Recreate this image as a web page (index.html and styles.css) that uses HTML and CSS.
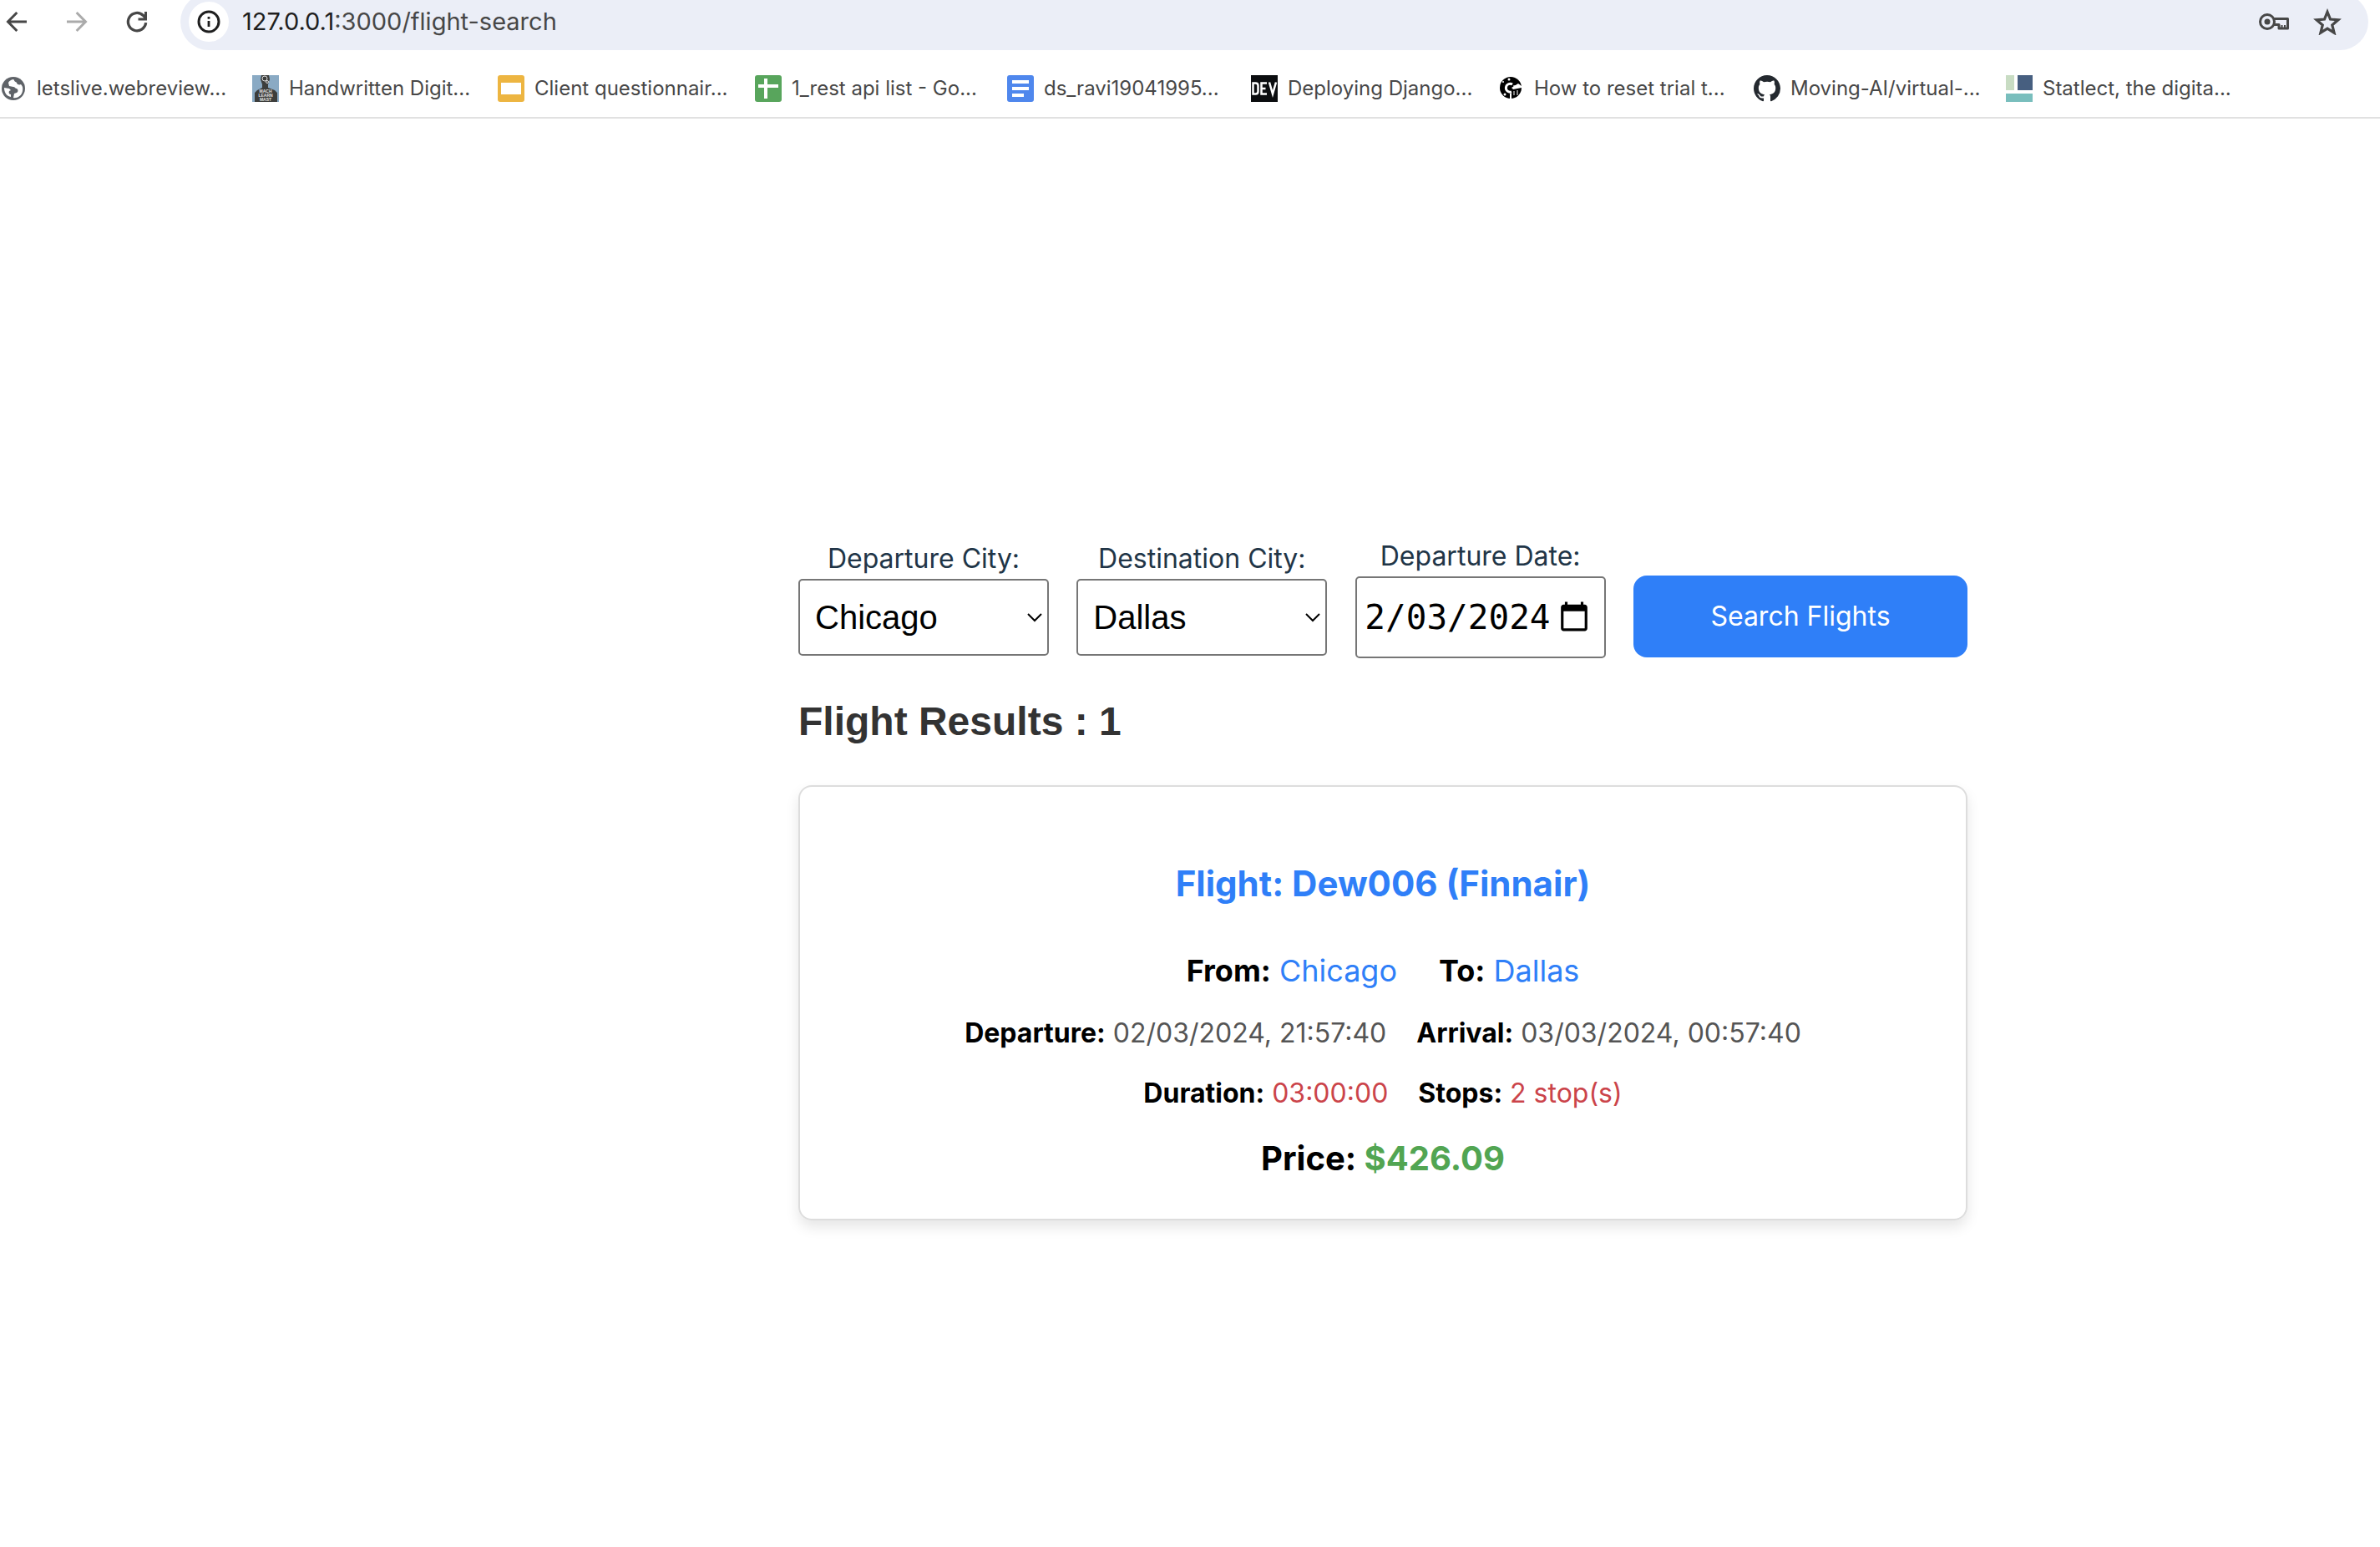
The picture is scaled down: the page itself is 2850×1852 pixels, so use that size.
FILE: index.html
```html
<!DOCTYPE html>
<html lang="en">
<head>
<meta charset="utf-8">
<title>Flight Search</title>
<link rel="stylesheet" href="styles.css">
</head>
<body>
<header class="browser">
  <div class="toolbar">
    <button class="nav-button" type="button" aria-label="Back"><svg viewBox="0 0 24 24"><path fill="none" stroke="currentColor" stroke-width="2" d="M20 12H5.500M12.200 4.700 5 12l7.200 7.300"/></svg></button>
    <button class="nav-button nav-button-off" type="button" aria-label="Forward"><svg viewBox="0 0 24 24"><path fill="none" stroke="currentColor" stroke-width="2" d="M4 12h14.500M11.800 4.700 19 12l-7.200 7.300"/></svg></button>
    <button class="nav-button" type="button" aria-label="Reload"><svg viewBox="0 0 24 24"><path fill="none" stroke="currentColor" stroke-width="2.200" d="M19.100 12.800a7.100 7.100 0 1 1-2.100-5.800l2 2.200"/><path fill="currentColor" d="M20 4v7h-7V9h5V4z"/></svg></button>
    <div class="address">
      <button class="site-info" type="button" aria-label="Site information"><svg viewBox="0 0 28 28"><circle cx="14" cy="14" r="12" fill="none" stroke="currentColor" stroke-width="3"/><path fill="currentColor" d="M12.600 13h2.800v7h-2.800zM12.600 8h2.800v2.800h-2.800z"/></svg></button>
      <span class="url"><span class="url-host">127.0.0.1</span>:3000/flight-search</span>
      <button class="address-action" type="button" aria-label="Passwords"><svg class="key" viewBox="0 0 38 22"><circle cx="11" cy="11" r="8.500" fill="none" stroke="currentColor" stroke-width="3"/><circle cx="11" cy="11" r="3.500" fill="currentColor"/><path fill="none" stroke="currentColor" stroke-width="3" stroke-linejoin="round" d="M19 7.500h16.500v11.500H25v-4.500h-6"/><path stroke="currentColor" stroke-width="2" d="M28.500 19v-4M32 19v-4"/></svg></button>
      <button class="address-action" type="button" aria-label="Bookmark this tab"><svg class="star" viewBox="0 0 32 31"><path fill="none" stroke="currentColor" stroke-width="3" d="m16 4 3.300 8.300 8.900.7-6.800 5.800 2.200 8.700L16 22.800l-7.600 4.700 2.200-8.700L3.800 13l8.900-.7z"/></svg></button>
    </div>
  </div>
  <nav class="bookmarks">
    <a class="bookmark" href="#"><svg viewBox="0 0 32 32"><circle cx="16" cy="16" r="14" fill="#5f6368"/><path fill="#fff" d="M16 5c-3 .5-5 2-6 4l1 4 5 1c2 0 2 2 4 2 2 1 2 4 0 5l-3 1-1 5c4 1 10-2 11-8 1-5-1-7-2-8-2 1-5 0-5-2 0-1-3-1-3-3zM5 15c0 6 3 10 8 11v-3c-2 0-3-2-2-4l2-1-2-2z"/></svg><span>letslive.webreview...</span></a>
    <a class="bookmark" href="#"><svg viewBox="0 0 32 32"><path fill="#8aaac4" d="M0 0h32v32H0z"/><path fill="#3d3e3c" d="M11 0h9l1 5-2 6v4l8 3 3 3v11H3V21l3-3 6-3v-4l-2-6z"/><circle cx="15" cy="4" r="3" fill="none" stroke="#ddd"/><circle cx="18" cy="8" r="1.500" fill="none" stroke="#ddd"/><g fill="#e4e4e4" font-family="Liberation Sans" font-weight="700" font-size="5" text-anchor="middle"><text x="16" y="21">MACH</text><text x="16" y="26">LEARN</text><text x="16" y="31">MAST</text></g></svg><span>Handwritten Digit...</span></a>
    <a class="bookmark" href="#"><svg viewBox="0 0 32 32"><rect width="32" height="32" rx="3" fill="#edb541"/><path fill="#fff" d="M4 9h24v14H4z"/></svg><span>Client questionnair...</span></a>
    <a class="bookmark" href="#"><svg viewBox="0 0 32 32"><rect width="32" height="32" rx="3" fill="#58a55c"/><path fill="#fff" d="M11 4h4v7h13v4H15v13h-4V15H4v-4h7z"/></svg><span>1_rest api list - Go...</span></a>
    <a class="bookmark" href="#"><svg viewBox="0 0 32 32"><rect width="32" height="32" rx="3" fill="#4f87ed"/><path fill="#fff" d="M6 6h20v4H6zM6 14h20v4H6zM6 22h14v4H6z"/></svg><span>ds_ravi19041995...</span></a>
    <a class="bookmark" href="#"><svg viewBox="0 0 32 32"><path fill="#0b0d0f" d="M0 0h32v32H0z"/><path fill="none" stroke="#fff" stroke-width="2.500" d="M2.500 9.500v13h3q3 0 3-3v-7q0-3-3-3zM19 9.500h-6.500v13H19M12.500 16h5M22 8.500l4 14 4-14"/></svg><span>Deploying Django...</span></a>
    <a class="bookmark" href="#"><svg viewBox="0 0 32 32"><circle cx="16" cy="15" r="13" fill="#000"/><path fill="none" stroke="#fff" stroke-width="3" d="M17 20a5 5 0 1 1 1-9"/><path fill="#fff" d="m17 15 8-5 4 3v2l-10 2zM15 22h2v7h-2z"/><circle cx="14" cy="5" r="1.500" fill="#fff"/><circle cx="7" cy="8" r="1" fill="#fff"/><circle cx="9" cy="23" r="1.500" fill="#fff"/><path stroke="#fff" d="M20 19v5M24 18v6M19 13l8-1"/></svg><span>How to reset trial t...</span></a>
    <a class="bookmark" href="#"><svg viewBox="0 0 16 16"><path fill="#24292f" d="M8 0C3.580 0 0 3.580 0 8c0 3.540 2.290 6.530 5.470 7.590.4.070.55-.17.55-.38 0-.19-.01-.82-.01-1.490-2.010.37-2.530-.49-2.690-.94-.09-.23-.48-.94-.82-1.130-.28-.15-.68-.52-.01-.53.63-.01 1.080.58 1.230.82.72 1.210 1.870.87 2.330.66.07-.52.28-.87.51-1.070-1.780-.2-3.640-.89-3.640-3.950 0-.87.31-1.590.82-2.150-.08-.2-.36-1.020.08-2.120 0 0 .67-.21 2.200.82.64-.18 1.320-.27 2-.27s1.360.09 2 .27c1.530-1.040 2.200-.82 2.200-.82.44 1.100.16 1.920.08 2.120.51.56.82 1.270.82 2.150 0 3.070-1.870 3.750-3.650 3.950.29.25.54.73.54 1.480 0 1.070-.01 1.930-.01 2.200 0 .21.15.46.55.38A8.010 8.010 0 0 0 16 8c0-4.420-3.580-8-8-8z"/></svg><span>Moving-AI/virtual-...</span></a>
    <a class="bookmark" href="#"><svg viewBox="0 0 32 32"><path fill="#c8dcc3" d="M0 0h10v18H0z"/><path fill="#475f80" d="M14 0h18v18H14z"/><path fill="#79bebd" d="M0 22h32v10H0z"/></svg><span>Statlect, the digita...</span></a>
  </nav>
</header>
<main class="page">
  <div class="content">
    <form class="search">
      <div class="field">
        <label for="from">Departure City:</label>
        <select class="control" id="from"><option>Chicago</option></select>
      </div>
      <div class="field">
        <label for="to">Destination City:</label>
        <select class="control" id="to"><option>Dallas</option></select>
      </div>
      <div class="field">
        <label for="date">Departure Date:</label>
        <input class="control control-date" id="date" type="date" value="2024-02-03">
      </div>
      <button class="submit" type="button">Search Flights</button>
    </form>
    <h2 class="results-title">Flight Results : 1</h2>
    <article class="card">
      <h3 class="flight">Flight: Dew006 (Finnair)</h3>
      <p class="row route"><span><strong>From:</strong> <span class="city">Chicago</span></span><span><strong>To:</strong> <span class="city">Dallas</span></span></p>
      <p class="row"><span><strong>Departure:</strong> <span class="time">02/03/2024, 21:57:40</span></span><span><strong>Arrival:</strong> <span class="time">03/03/2024, 00:57:40</span></span></p>
      <p class="row"><span><strong>Duration:</strong> <span class="alert">03:00:00</span></span><span><strong>Stops:</strong> <span class="alert">2 stop(s)</span></span></p>
      <p class="price">Price: <span class="amount">$426.09</span></p>
    </article>
  </div>
</main>
</body>
</html>
```
FILE: styles.css
```css
* { box-sizing: border-box; }

body {
  margin: 0;
  background: #fff;
  color: #000;
  font-family: Inter, "Noto Sans", sans-serif;
  font-size: 32px;
  line-height: 48px;
}

button { border: 0; padding: 0; background: none; color: inherit; font: inherit; }
svg { display: block; }

/* Browser chrome */
.browser { border-bottom: 2px solid #e1e1e1; overflow: hidden; }

.toolbar {
  display: flex;
  align-items: center;
  gap: 36px;
  height: 68px;
  margin-top: -8px;
  padding: 0 14px 0 2px;
  color: #474747;
}
.nav-button { flex: none; width: 36px; }
.nav-button-off { color: #ababab; }

.address {
  flex: 1;
  display: flex;
  align-items: center;
  height: 68px;
  margin-left: -2px;
  padding: 0 32px 0 10px;
  border-radius: 34px;
  background: #ebeef7;
}
.site-info {
  display: grid;
  place-items: center;
  width: 48px;
  height: 48px;
  margin-right: 16px;
  border-radius: 50%;
  background: #fff;
  color: #1f1f1f;
}
.site-info svg { width: 28px; }
.url { flex: 1; font-size: 29px; }
.url-host { color: #1f1f1f; }
.address-action { margin-left: 28px; }
.key { width: 38px; }
.star { width: 34px; }

.bookmarks {
  display: grid;
  grid-template-columns: 302px 294px 308px 302px 292px 295px 307px 302px auto;
  align-items: center;
  height: 80px;
  padding-top: 12px;
  color: #474747;
  font-size: 24px;
  line-height: 32px;
}
.bookmark {
  display: flex;
  gap: 12px;
  color: inherit;
  text-decoration: none;
  white-space: nowrap;
}
.bookmark svg { flex: none; width: 32px; height: 32px; }

/* Page */
.page {
  display: grid;
  grid-template-columns: 956fr minmax(auto, 1400px) 494fr;
  padding: 500px 0 120px;
}
.content { grid-column: 2; }

.search {
  display: flex;
  justify-content: space-between;
  align-items: center;
}
.field { display: flex; flex-direction: column; width: 300px; color: #213547; }
.field label { text-align: center; }

.control {
  width: 100%;
  height: 92px;
  margin: 0;
  padding: 0 18px;
  border: 2px solid #767676;
  border-radius: 5px;
  background: #fff;
  color: #000;
  font-family: "Liberation Sans", Arial, sans-serif;
  font-size: 40px;
}
select.control {
  appearance: none;
  background: #fff url("data:image/svg+xml,%3Csvg xmlns='http://www.w3.org/2000/svg' viewBox='0 0 20 12'%3E%3Cpath d='M2 2l8 8 8-8' fill='none' stroke='%23000' stroke-width='2'/%3E%3C/svg%3E") no-repeat right 5px center / 20px 12px;
}
.control-date {
  height: 98px;
  padding: 0 16px 0 10px;
  font-family: "DejaVu Sans Mono", monospace;
  font-size: 41px;
}
.control-date::-webkit-datetime-edit { overflow: hidden; padding: 0; }
.control-date::-webkit-datetime-edit-fields-wrapper { margin-left: -25px; padding: 0; }
.control-date::-webkit-datetime-edit-month-field,
.control-date::-webkit-datetime-edit-day-field,
.control-date::-webkit-datetime-edit-year-field { padding: 0; }
.control-date::-webkit-calendar-picker-indicator { width: 40px; height: 40px; margin: 0; padding: 0; }

.submit {
  width: 400px;
  height: 98px;
  margin-top: 46px;
  border-radius: 16px;
  background: #2f7ff8;
  color: #fff;
}

.results-title {
  margin: 48px 0;
  color: #333;
  font: 700 48px/56px "Liberation Sans", Arial, sans-serif;
}

.card {
  padding: 84px 40px 42px;
  border: 2px solid #ddd;
  border-radius: 16px;
  box-shadow: 0 8px 16px rgba(0, 0, 0, 0.1);
  text-align: center;
}
.flight { margin: 0 0 45px; color: #2f7ff8; font-size: 42px; font-weight: 700; line-height: 64px; }
.row { display: flex; justify-content: center; gap: 36px; margin: 0 0 24px; }
.row strong { font-weight: 700; }
.route { gap: 50px; font-size: 36px; line-height: 54px; }
.city { color: #2f7ff8; }
.time { color: #555; }
.alert { color: #cb444a; }
.price { margin: 0; font-size: 40px; font-weight: 700; line-height: 60px; }
.amount { color: #52a552; }
```
